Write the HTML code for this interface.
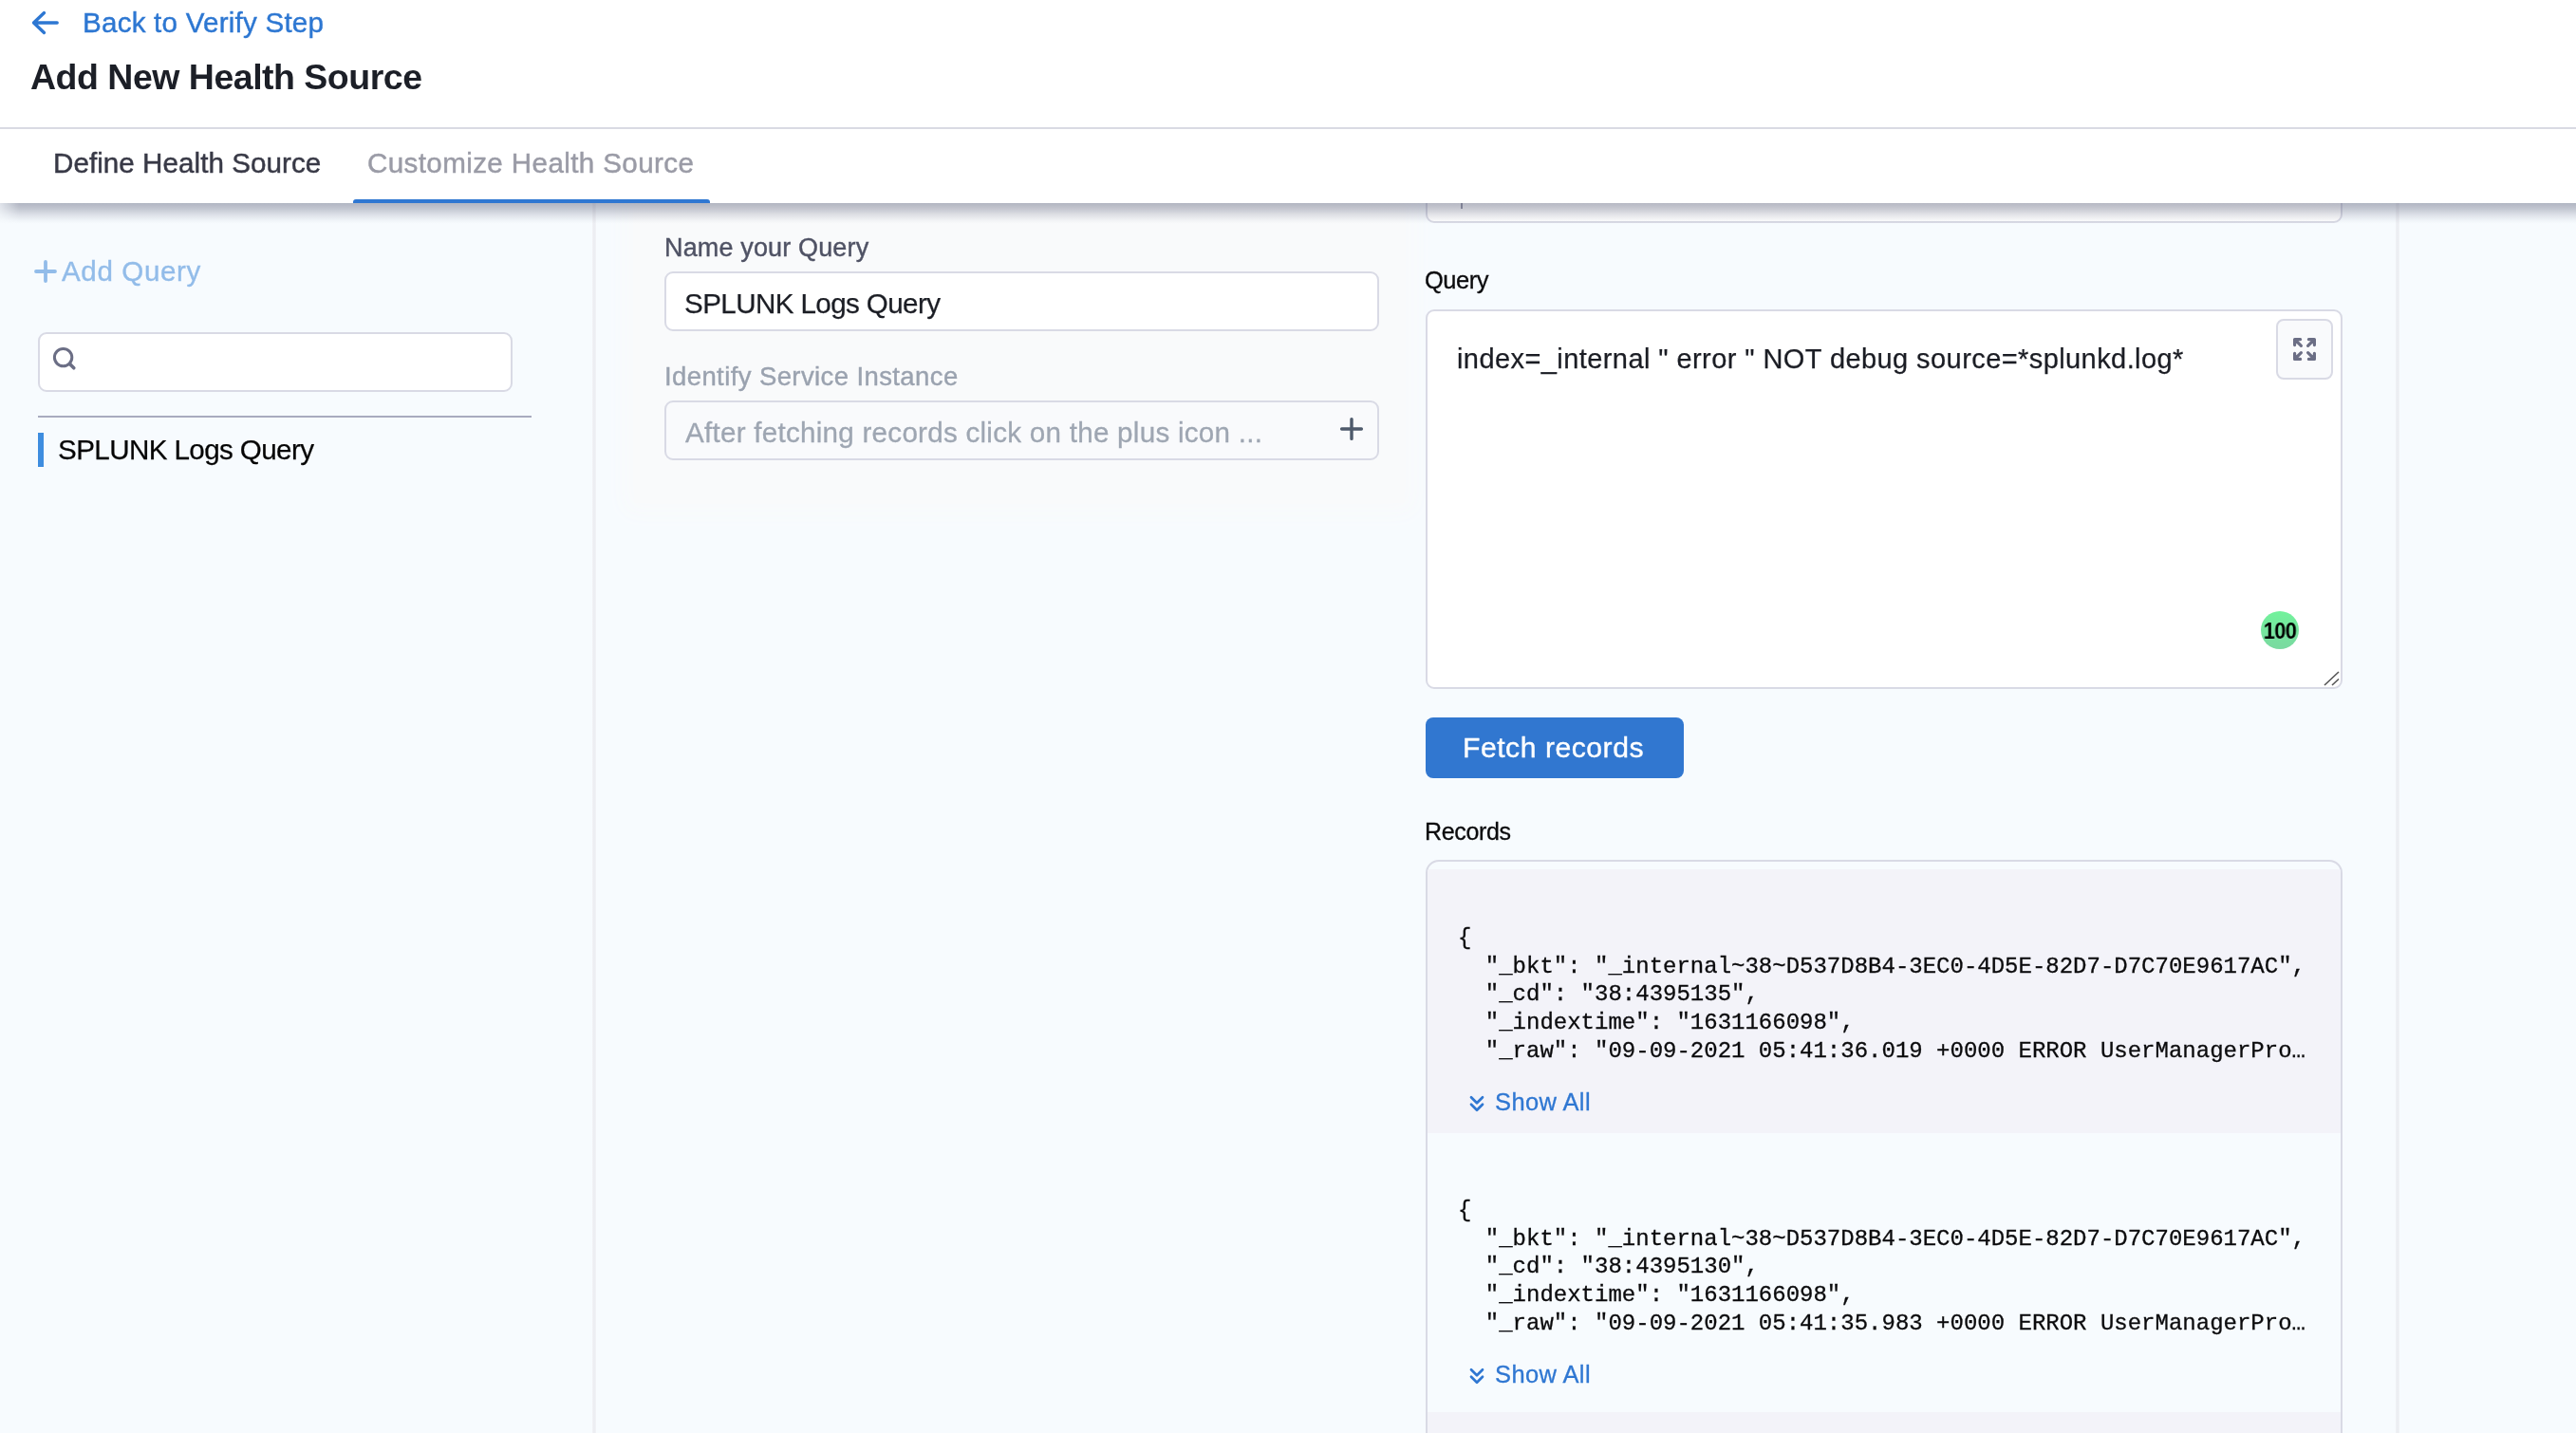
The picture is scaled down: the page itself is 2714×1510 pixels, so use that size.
<!DOCTYPE html>
<html><head><meta charset="utf-8">
<style>
html,body{margin:0;padding:0;width:2714px;height:1510px;overflow:hidden;background:#f7fbfe;font-family:"Liberation Sans",sans-serif;}
.a{position:absolute;}
.t{position:absolute;white-space:pre;line-height:1;will-change:transform;}
.m{position:absolute;white-space:pre;font-family:"Liberation Mono",monospace;font-size:24px;line-height:29.7px;color:#0b0b0d;-webkit-text-stroke:0.3px #0b0b0d;will-change:transform;}
</style></head>
<body>
<!-- panels -->
<div class="a" style="left:0;top:214px;width:2714px;height:1296px;background:#f7fbfe;"></div>
<div class="a" style="left:668px;top:200px;width:812px;height:330px;background:#f9fafb;box-shadow:0 0 22px 10px #f9fafb;"></div>
<div class="a" style="left:624px;top:214px;width:4px;height:1296px;background:linear-gradient(90deg,#f3f4f7,#eaecf1 50%,#f3f4f7);"></div>
<div class="a" style="left:2524px;top:214px;width:4px;height:1296px;background:linear-gradient(90deg,#f1f3f6,#eaecf1 50%,#f1f3f6);"></div>
<!-- LEFT PANEL -->
<svg class="a" style="left:34px;top:272px" width="28" height="28" viewBox="0 0 28 28"><path d="M14 4V24M4 14H24" stroke="#92bce9" stroke-width="3.8" stroke-linecap="round" fill="none"/></svg>
<div class="t" id="addq" style="left:64.5px;top:271px;font-size:29.6px;color:#92bce9;letter-spacing:0.6px;-webkit-text-stroke:0.35px #92bce9;">Add Query</div>
<div class="a" style="left:40px;top:350px;width:496px;height:59px;background:#fff;border:2px solid #d9dae5;border-radius:9px;"></div>
<svg class="a" style="left:52px;top:362px" width="32" height="32" viewBox="0 0 32 32"><circle cx="14.6" cy="14.6" r="9.2" stroke="#6b6e85" stroke-width="3" fill="none"/><path d="M21.5 21.5L25.8 25.8" stroke="#6b6e85" stroke-width="3.6" stroke-linecap="round"/></svg>
<div class="a" style="left:40px;top:438px;width:520px;height:2px;background:#a9abbf;"></div>
<div class="a" style="left:40px;top:456px;width:6px;height:36px;background:#3e8ddf;"></div>
<div class="t" style="left:61px;top:459px;font-size:29.6px;color:#050505;letter-spacing:-0.6px;-webkit-text-stroke:0.25px #050505;">SPLUNK Logs Query</div>

<!-- MIDDLE PANEL -->
<div class="t" style="left:700px;top:247.5px;font-size:27px;color:#4f5264;letter-spacing:0.15px;-webkit-text-stroke:0.4px #4f5264;">Name your Query</div>
<div class="a" style="left:700px;top:286px;width:749px;height:59px;background:#fff;border:2px solid #d9dae5;border-radius:9px;"></div>
<div class="t" style="left:721px;top:305px;font-size:29.6px;color:#1b1d24;letter-spacing:-0.6px;-webkit-text-stroke:0.25px #1b1d24;">SPLUNK Logs Query</div>
<div class="t" style="left:700px;top:383px;font-size:27.5px;color:#9aa2af;letter-spacing:0.4px;-webkit-text-stroke:0.4px #9aa2af;">Identify Service Instance</div>
<div class="a" style="left:700px;top:422px;width:749px;height:59px;background:#f9fafc;border:2px solid #d9dae5;border-radius:9px;"></div>
<div class="t" style="left:722px;top:441px;font-size:29.6px;color:#9ea6b2;letter-spacing:0.26px;-webkit-text-stroke:0.3px #9ea6b2;">After fetching records click on the plus icon ...</div>
<svg class="a" style="left:1410px;top:438px" width="28" height="28" viewBox="0 0 28 28"><path d="M14 3.6V24.4M3.6 14H24.4" stroke="#4e5a6b" stroke-width="3.4" stroke-linecap="round" fill="none"/></svg>

<!-- RIGHT PANEL -->
<div class="a" style="left:1502px;top:150px;width:962px;height:81px;background:#fff;border:2px solid #d9dae5;border-radius:9px;"></div>
<div class="t" style="left:1501px;top:283px;font-size:25.5px;color:#0b0b0d;letter-spacing:-0.5px;-webkit-text-stroke:0.3px #0b0b0d;">Query</div>
<div class="a" style="left:1502px;top:326px;width:962px;height:396px;background:#fff;border:2px solid #d9dae5;border-radius:9px;"></div>
<div class="t" style="left:1534.5px;top:364px;font-size:29px;color:#1b1d24;letter-spacing:0.42px;-webkit-text-stroke:0.25px #1b1d24;">index=_internal " error " NOT debug source=*splunkd.log*</div>
<div class="a" style="left:2398px;top:336px;width:56px;height:60px;background:#f9fafc;border:2px solid #d9dae5;border-radius:8px;"></div>
<svg class="a" style="left:2414px;top:354px" width="28" height="28" viewBox="0 0 28 28" fill="none" stroke="#6b6e85" stroke-width="3.2" stroke-linecap="round" stroke-linejoin="round">
<path d="M3.6 9.6V3.6H9.6M3.6 3.6L10.4 10.4"/><path d="M24.4 9.6V3.6H18.4M24.4 3.6L17.6 10.4"/><path d="M3.6 18.4V24.4H9.6M3.6 24.4L10.4 17.6"/><path d="M24.4 18.4V24.4H18.4M24.4 24.4L17.6 17.6"/>
</svg>
<div class="a" style="left:2382px;top:644px;width:40px;height:40px;border-radius:50%;background:linear-gradient(180deg,#72f29c,#7ad9a0);"></div>
<div class="t" style="left:2381.5px;top:653.5px;width:40px;text-align:center;font-size:23.5px;font-weight:700;color:#000;letter-spacing:-0.6px;transform:scaleX(0.92);">100</div>
<svg class="a" style="left:2446px;top:706px" width="20" height="18" viewBox="0 0 20 18"><path d="M3 16L18 2M11 16L18 9.5" stroke="#555" stroke-width="1.6"/></svg>

<div class="a" style="left:1502px;top:756px;width:272px;height:64px;background:#3177d0;border-radius:8px;"></div>
<div class="t" style="left:1541px;top:773px;font-size:30.2px;color:#fff;letter-spacing:0.5px;-webkit-text-stroke:0.35px #fff;">Fetch records</div>

<div class="t" style="left:1501px;top:863.5px;font-size:25px;color:#0b0b0d;letter-spacing:-0.35px;-webkit-text-stroke:0.3px #0b0b0d;">Records</div>
<div class="a" style="left:1502px;top:906px;width:962px;height:700px;border:2px solid #d9dae5;border-radius:14px;overflow:hidden;background:#f7fbfe;">
  <div class="a" style="left:0;top:8px;width:963px;height:278px;background:#f3f3f9;"></div>
  <div class="a" style="left:0;top:580px;width:963px;height:300px;background:#f3f3f9;"></div>
</div>
<div class="m" style="left:1536px;top:974px;">{
  "_bkt": "_internal~38~D537D8B4-3EC0-4D5E-82D7-D7C70E9617AC",
  "_cd": "38:4395135",
  "_indextime": "1631166098",
  "_raw": "09-09-2021 05:41:36.019 +0000 ERROR UserManagerPro…</div>
<svg class="a" style="left:1546px;top:1153.6px" width="20" height="20" viewBox="0 0 20 20" fill="none" stroke="#2f77d2" stroke-width="2.7" stroke-linecap="round" stroke-linejoin="round"><path d="M4 2.3L10 8.3L16 2.3M4 9.8L10 15.8L16 9.8"/></svg>
<div class="t" style="left:1575px;top:1149px;font-size:25.5px;color:#2f77d2;letter-spacing:0.4px;-webkit-text-stroke:0.3px #2f77d2;">Show All</div>
<div class="m" style="left:1536px;top:1260.5px;">{
  "_bkt": "_internal~38~D537D8B4-3EC0-4D5E-82D7-D7C70E9617AC",
  "_cd": "38:4395130",
  "_indextime": "1631166098",
  "_raw": "09-09-2021 05:41:35.983 +0000 ERROR UserManagerPro…</div>
<svg class="a" style="left:1546px;top:1441px" width="20" height="20" viewBox="0 0 20 20" fill="none" stroke="#2f77d2" stroke-width="2.7" stroke-linecap="round" stroke-linejoin="round"><path d="M4 2.3L10 8.3L16 2.3M4 9.8L10 15.8L16 9.8"/></svg>
<div class="t" style="left:1575px;top:1436.2px;font-size:25.5px;color:#2f77d2;letter-spacing:0.4px;-webkit-text-stroke:0.3px #2f77d2;">Show All</div>


<div class="a" style="left:1539px;top:212px;width:2px;height:8px;background:#9a9cab;"></div>
<!-- header -->
<div class="a" style="left:0;top:0;width:2714px;height:214px;background:#fff;"></div>
<div class="a" style="left:0;top:214px;width:2714px;height:22px;background:linear-gradient(180deg,rgba(80,85,112,0.42),rgba(80,85,112,0.31) 28%,rgba(80,85,112,0.16) 55%,rgba(80,85,112,0.05) 80%,rgba(80,85,112,0));-webkit-mask-image:linear-gradient(90deg,rgba(0,0,0,0.35),#000 20px);"></div>
<div class="a" style="left:0;top:134px;width:2714px;height:2px;background:#d9dae3;"></div>
<svg class="a" style="left:30px;top:8px" width="36" height="32" viewBox="0 0 36 32"><path d="M5.5 16H30.2M16.5 5.6L5.5 16L16.5 26.4" stroke="#2d77d2" stroke-width="3.4" stroke-linecap="round" stroke-linejoin="round" fill="none"/></svg>
<div class="t" style="left:87px;top:9px;font-size:29.6px;color:#2d77d2;letter-spacing:0.22px;-webkit-text-stroke:0.4px #2d77d2;">Back to Verify Step</div>
<div class="t" style="left:32px;top:63px;font-size:37.5px;font-weight:700;color:#1c1f27;letter-spacing:-0.5px;">Add New Health Source</div>
<div class="t" style="left:56px;top:157px;font-size:29.6px;color:#383946;letter-spacing:0.05px;-webkit-text-stroke:0.45px #383946;">Define Health Source</div>
<div class="t" style="left:387px;top:157px;font-size:29.6px;color:#9a9ba6;letter-spacing:0.38px;-webkit-text-stroke:0.45px #9a9ba6;">Customize Health Source</div>
<div class="a" style="left:372px;top:210px;width:376px;height:4px;background:#2f77d2;border-radius:3px 3px 0 0;"></div>
</body></html>
